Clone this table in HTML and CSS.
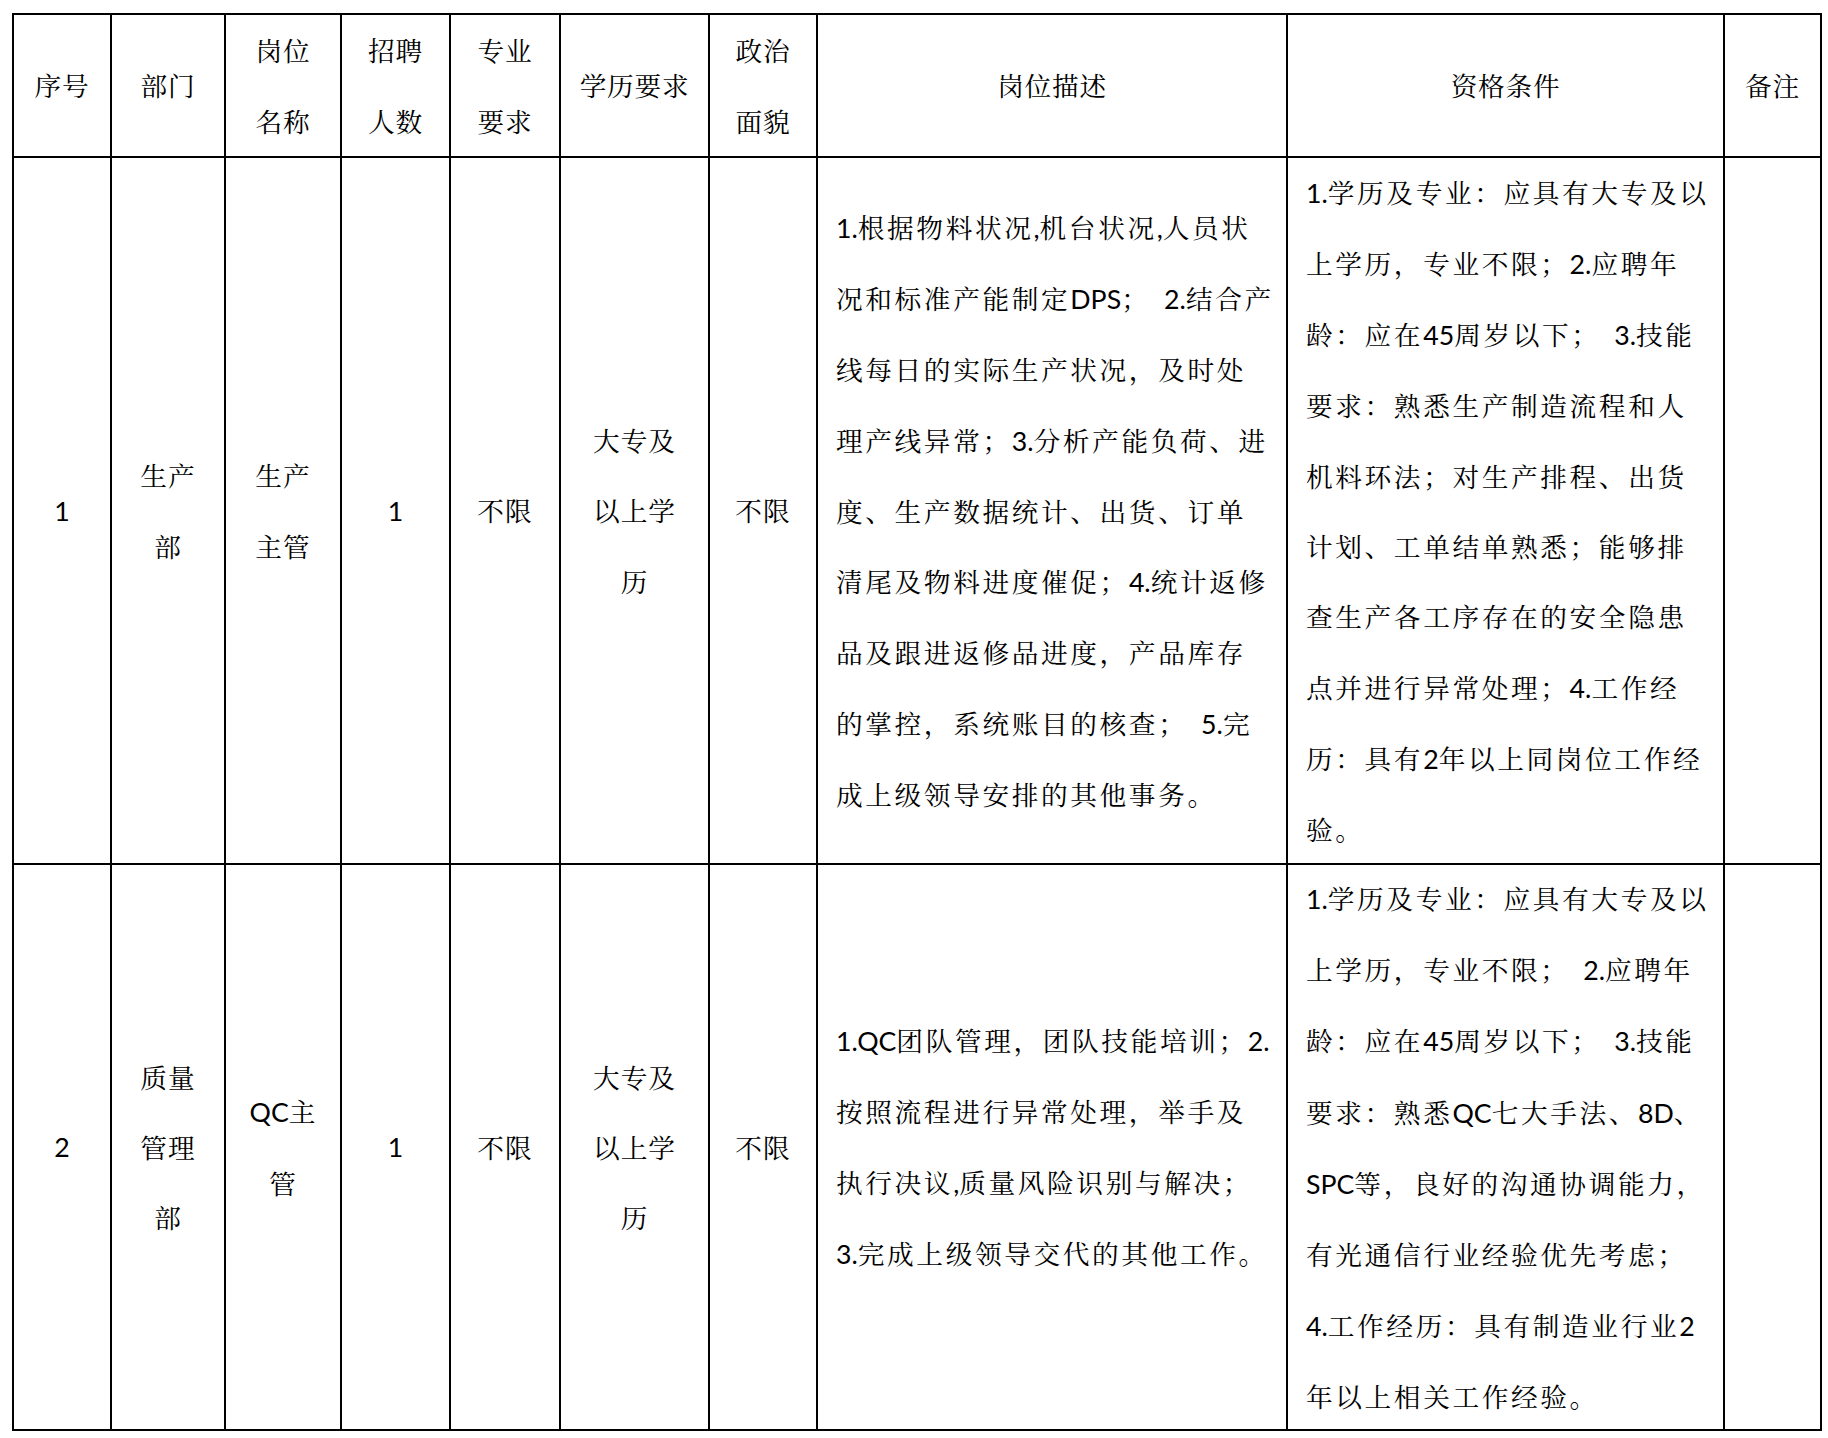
FILE: index.html
```html
<!DOCTYPE html>
<html lang="zh-CN">
<head>
<meta charset="utf-8">
<title>招聘岗位表</title>
<link rel="stylesheet" href="styles.css">
</head>
<body>
<div class="table">
  <div class="cell head"><p>序号</p></div>
  <div class="cell head"><p>部门</p></div>
  <div class="cell head"><p>岗位<br>名称</p></div>
  <div class="cell head"><p>招聘<br>人数</p></div>
  <div class="cell head"><p>专业<br>要求</p></div>
  <div class="cell head"><p>学历要求</p></div>
  <div class="cell head"><p>政治<br>面貌</p></div>
  <div class="cell head"><p>岗位描述</p></div>
  <div class="cell head"><p>资格条件</p></div>
  <div class="cell head"><p>备注</p></div>

  <div class="cell mid"><p><span class="l">1</span></p></div>
  <div class="cell mid"><p>生产<br>部</p></div>
  <div class="cell mid"><p>生产<br>主管</p></div>
  <div class="cell mid"><p><span class="l">1</span></p></div>
  <div class="cell mid"><p>不限</p></div>
  <div class="cell mid"><p>大专及<br>以上学<br>历</p></div>
  <div class="cell mid"><p>不限</p></div>
  <div class="cell text"><p><span class="l">1.</span>根据物料状况<span class="l">,</span>机台状况<span class="l">,</span>人员状<br>况和标准产能制定<span class="l">DPS</span>；<span class="l">&nbsp; 2.</span>结合产<br>线每日的实际生产状况，及时处<br>理产线异常；<span class="l">3.</span>分析产能负荷、进<br>度、生产数据统计、出货、订单<br>清尾及物料进度催促；<span class="l">4.</span>统计返修<br>品及跟进返修品进度，产品库存<br>的掌控，系统账目的核查；<span class="l">&nbsp; 5.</span>完<br>成上级领导安排的其他事务。</p></div>
  <div class="cell text"><p><span class="l">1.</span>学历及专业：应具有大专及以<br>上学历，专业不限；<span class="l">2.</span>应聘年<br>龄：应在<span class="l">45</span>周岁以下；<span class="l">&nbsp; 3.</span>技能<br>要求：熟悉生产制造流程和人<br>机料环法；对生产排程、出货<br>计划、工单结单熟悉；能够排<br>查生产各工序存在的安全隐患<br>点并进行异常处理；<span class="l">4.</span>工作经<br>历：具有<span class="l">2</span>年以上同岗位工作经<br>验。</p></div>
  <div class="cell mid"></div>

  <div class="cell mid"><p><span class="l">2</span></p></div>
  <div class="cell mid"><p>质量<br>管理<br>部</p></div>
  <div class="cell mid"><p><span class="l">QC</span>主<br>管</p></div>
  <div class="cell mid"><p><span class="l">1</span></p></div>
  <div class="cell mid"><p>不限</p></div>
  <div class="cell mid"><p>大专及<br>以上学<br>历</p></div>
  <div class="cell mid"><p>不限</p></div>
  <div class="cell text"><p><span class="l">1.QC</span>团队管理，团队技能培训；<span class="l">2.</span><br>按照流程进行异常处理，举手及<br>执行决议<span class="l">,</span>质量风险识别与解决；<br><span class="l">3.</span>完成上级领导交代的其他工作。</p></div>
  <div class="cell text"><p><span class="l">1.</span>学历及专业：应具有大专及以<br>上学历，专业不限；<span class="l">&nbsp; 2.</span>应聘年<br>龄：应在<span class="l">45</span>周岁以下；<span class="l">&nbsp; 3.</span>技能<br>要求：熟悉<span class="l">QC</span>七大手法、<span class="l">8D</span>、<br><span class="l">SPC</span>等，良好的沟通协调能力，<br>有光通信行业经验优先考虑；<br><span class="l">4.</span>工作经历：具有制造业行业<span class="l">2</span><br>年以上相关工作经验。</p></div>
  <div class="cell mid"></div>
</div>
</body>
</html>
```

FILE: styles.css
```css
html, body {
  margin: 0;
  padding: 0;
  background: #fff;
}

body {
  font-family: "Noto Serif CJK SC", "Noto Sans CJK SC", serif;
  color: #000;
  font-size: 26.7px;
  line-height: 70.3px;
}

.table {
  display: grid;
  grid-template-columns: 96px 112px 114px 107px 108px 147px 106px 468px 435px 95px;
  grid-template-rows: 141px 705px 564px;
  gap: 2px;
  padding: 2px;
  background: #000;
  width: max-content;
  margin: 13px 0 0 12px;
}

.cell {
  background: #fff;
  display: flex;
  align-items: center;
  justify-content: center;
  text-align: center;
  overflow: hidden;
}

.cell p {
  margin: 0;
  white-space: nowrap;
}

.head {
  letter-spacing: 0.7px;
}

.mid {
  letter-spacing: 1px;
}

.text {
  justify-content: flex-start;
  text-align: left;
  padding-left: 18px;
  letter-spacing: 2.6px;
}

.l {
  font-family: "Lato", "Liberation Sans", sans-serif;
  letter-spacing: 0;
}
```
